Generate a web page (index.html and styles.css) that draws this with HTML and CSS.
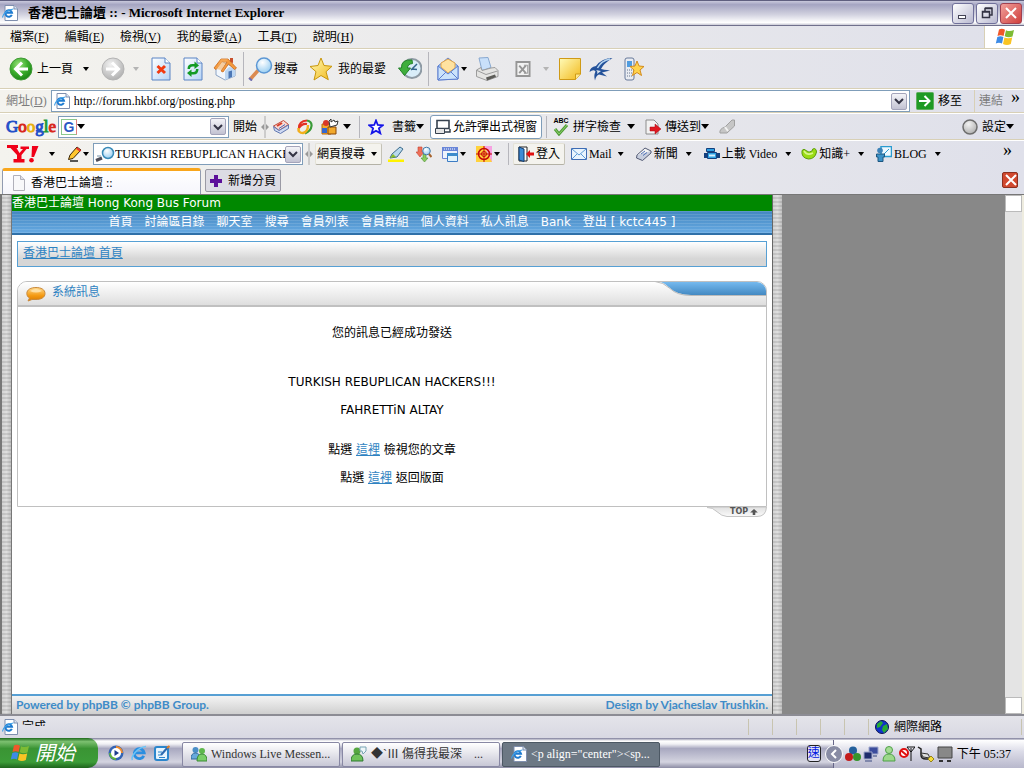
FILE: index.html
```html
<!DOCTYPE html>
<html lang="zh-Hant">
<head>
<meta charset="utf-8">
<title>香港巴士論壇 ::</title>
<link rel="stylesheet" href="styles.css">
</head>
<body>
<svg class="defs" aria-hidden="true">
  <defs>
    <radialGradient id="gGreen" cx=".4" cy=".3" r=".8"><stop offset="0" stop-color="#9be27c"/><stop offset=".5" stop-color="#3cae2c"/><stop offset="1" stop-color="#127a10"/></radialGradient>
    <radialGradient id="gGray" cx=".4" cy=".3" r=".8"><stop offset="0" stop-color="#f2f2f2"/><stop offset="1" stop-color="#a9a9a9"/></radialGradient>
    <radialGradient id="gSky" cx=".4" cy=".3" r=".8"><stop offset="0" stop-color="#fff"/><stop offset="1" stop-color="#8cc8f0"/></radialGradient>
    <linearGradient id="gGold" x1="0" y1="0" x2="1" y2="1"><stop offset="0" stop-color="#fffbb8"/><stop offset="1" stop-color="#f2b91c"/></linearGradient>
    <linearGradient id="gPage" x1="0" y1="0" x2="1" y2="1"><stop offset="0" stop-color="#fff"/><stop offset="1" stop-color="#b5d3f6"/></linearGradient>
    <linearGradient id="gOrange" x1="0" y1="0" x2="0" y2="1"><stop offset="0" stop-color="#ffd98c"/><stop offset=".6" stop-color="#f49a12"/><stop offset="1" stop-color="#d97b00"/></linearGradient>
    <linearGradient id="gSwoosh" x1="0" y1="0" x2="0" y2="1"><stop offset="0" stop-color="#79bdf2"/><stop offset="1" stop-color="#4389c2"/></linearGradient>
    <linearGradient id="gTop" x1="0" y1="0" x2="0" y2="1"><stop offset="0" stop-color="#e0e0e0"/><stop offset="1" stop-color="#fafafa"/></linearGradient>
  </defs>
  <symbol id="ie" viewBox="0 0 16 16"><path d="M3 .5h9l3.500 3.500v11.500H3z" fill="#fff" stroke="#7f8fae"/><path d="M12 .5V4h3.500" fill="#dbe5f4" stroke="#7f8fae"/><path d="M9.800 9.800a3.300 3.300 0 1 1 .2-2.100H4" fill="none" stroke="#1e7bd0" stroke-width="2"/><path d="M.8 12.500C0 10 5 4.500 11.500 4" fill="none" stroke="#3fa0e8" stroke-width="1.200"/></symbol>
  <symbol id="iebig" viewBox="0 0 16 16"><path d="M12.800 10.800a5 5 0 1 1 .4-3H4" fill="none" stroke="#2a8ee0" stroke-width="2.800"/><path d="M1.500 15C-.5 12 6 2.500 15 1.500" fill="none" stroke="#6cc4f6" stroke-width="1.500"/></symbol>
  <symbol id="flag" viewBox="0 0 20 18"><path d="M4 1.500Q7-.2 10 1.700L8.600 8Q5.500 6.500 2.500 8z" fill="#f0582a"/><path d="M11 2.200Q14.500 4 19 2L17.500 8.500Q13.500 10 9.700 8.200z" fill="#7dbb34"/><path d="M2.300 9Q5.500 7.500 8.400 9L7 15.500Q4 14 .8 15.500z" fill="#3d8be6"/><path d="M9.400 9.500Q13 11 17.200 9.500L15.800 16Q12 18 8 16z" fill="#f9c424"/></symbol>
  <symbol id="back" viewBox="0 0 24 24"><circle cx="12" cy="12" r="11" fill="url(#gGreen)" stroke="#3f9a35"/><path d="M13 5.500L6.500 12l6.500 6.500M7.500 12H19" fill="none" stroke="#fff" stroke-width="3"/></symbol>
  <symbol id="fwd" viewBox="0 0 24 24"><circle cx="12" cy="12" r="11" fill="url(#gGray)" stroke="#b4b4b4"/><path d="M11 5.500l6.500 6.500-6.500 6.500M16.500 12H5" fill="none" stroke="#fff" stroke-width="3"/></symbol>
  <symbol id="stop" viewBox="0 0 20 24"><path d="M1 1h13l5 5v17H1z" fill="url(#gPage)" stroke="#5b84c4"/><path d="M14 1v5h5" fill="#fff" stroke="#5b84c4"/><path d="M6.500 9l7.500 7M14 9l-7.500 7" stroke="#f23a10" stroke-width="3"/></symbol>
  <symbol id="refresh" viewBox="0 0 20 24"><path d="M1 1h13l5 5v17H1z" fill="url(#gPage)" stroke="#5b84c4"/><path d="M14 1v5h5" fill="#fff" stroke="#5b84c4"/><path d="M4.500 12q0-5 5-5h2V4.500l4.500 4-4.500 3.500V9.500h-2q-2.500 0-2.500 2.500zM15.500 12q0 5.500-5 5.500h-2V20L4 16l4.500-3.500V15h2q2.500 0 2.500-3z" fill="#129a24"/></symbol>
  <symbol id="home" viewBox="0 0 24 24"><path d="M3 11l5-7 14 7v8l-10 4-9-5z" fill="#f2f7fd" stroke="#8ca3c4"/><path d="M12 14l4-4 6 1v8l-10 4z" fill="#bcd6f2"/><path d="M15.500 14.500l3.500-1V20l-3.500 1.500z" fill="#4c77b5"/><path d="M17 1h3v5l-3-1z" fill="#c8502c"/><path d="M1 11L8 2l7 0 8.500 9-2 1.500-6-5.500-5.500 8-2-1L14 5 9 4.500 3 12.500z" fill="#f59a3c" stroke="#c96a1c" stroke-width=".8"/><path d="M8 2l7 0-6.500 11L3 12z" fill="#f9b060" opacity=".6"/></symbol>
  <symbol id="mag" viewBox="0 0 26 24"><path d="M2 22.500l8-9" stroke="#db8a50" stroke-width="3.500"/><circle cx="16" cy="8.500" r="7.500" fill="url(#gSky)" stroke="#5c97d4" stroke-width="1.500"/><path d="M1 21l3 2.500" stroke="#6b6eb4" stroke-width="2"/></symbol>
  <symbol id="magl" viewBox="0 0 20 16"><path d="M1 14.500l6-2.500" stroke="#4c4c58" stroke-width="3"/><circle cx="13" cy="7" r="5.500" fill="url(#gSky)" stroke="#398ab8" stroke-width="1.500"/><path d="M2 10h4" stroke="#7893a8"/></symbol>
  <symbol id="star" viewBox="0 0 24 24"><path d="M12 1l3 7.500 8 .8-6 5.400 2.300 8L12 18.500 5 23l2-8.300L1 9.500l8-1z" fill="url(#gGold)" stroke="#c8960c"/></symbol>
  <symbol id="bluestar" viewBox="0 0 16 16"><path d="M8 1.500l1.800 4.500 5 .3-3.900 3 1.400 5L8 11.700l-4.300 2.600 1.400-5-3.900-3 5-.3z" fill="#fff" stroke="#1414e8" stroke-width="1.800"/></symbol>
  <symbol id="history" viewBox="0 0 24 24"><circle cx="14" cy="11.500" r="9.500" fill="#d9edf9" stroke="#8e9aa4" stroke-width="2"/><path d="M13 13l6-6M14 12l5 .5" stroke="#33658c" stroke-width="1.500"/><path d="M14 3Q3 2 3.500 11H.5l6 7.500L12.500 11H9.500q0-4 5-4.500z" fill="#3fae3c" stroke="#23802a"/></symbol>
  <symbol id="mail" viewBox="0 0 22 24"><path d="M1 9l10-8 10 8v13l-20 1z" fill="#9fc4f2" stroke="#5d7fd0"/><path d="M4 10V6l7-4 7 4v5l-7 5z" fill="#ffe2a0" stroke="#e3a64c"/><path d="M1 9l10 8L21 9v13L1 23z" fill="#cbe3fb" stroke="#5d7fd0"/><path d="M1 23l8-8M21 22l-7-7" stroke="#5d7fd0"/></symbol>
  <symbol id="print" viewBox="0 0 24 24"><path d="M4 1l9-.5 3 10-9 3z" fill="#c9e0fa" stroke="#88a8d0"/><path d="M1.500 13L6 10.500l1 3 9-2.500 4-.5 3 3v6l-11 4-10.500-4z" fill="#e4e4e2" stroke="#9c9c9c"/><path d="M2 13.500l9 4 11.500-3.500" fill="none" stroke="#9c9c9c"/><path d="M11 20.500l9-3 1 2.500-9 3.500z" fill="#5c5c58"/></symbol>
  <symbol id="excel" viewBox="0 0 16 17"><path d="M1 1h14v15H1z" fill="#f2f2f2" stroke="#969696" stroke-width="2"/><path d="M4 5l7 8M11 5l-7 8" stroke="#969696" stroke-width="2"/><path d="M9 4.500h4V13H9" fill="none" stroke="#969696"/></symbol>
  <symbol id="note" viewBox="0 0 22 22"><path d="M.5.500h21v15.500l-5 5.500H.5z" fill="url(#gGold)" stroke="#cf9a16"/><path d="M16.500 21.500V16h5" fill="#ffe98e" stroke="#cf9a16"/></symbol>
  <symbol id="bird" viewBox="0 0 24 24"><path d="M23.500 1Q13 1 7 9 1 10 .5 15q4-3 6-.5-2 4-.5 9 1-5 4-6l8 2-5-4 8-2q-7-1-9-1.500Q14 7 23.500 1z" fill="#24529a"/><path d="M21 2Q12 4 8.500 11" stroke="#b4d4f0" fill="none" stroke-width="1.500"/><path d="M7 13q2 1 1 4l4-3z" fill="#dce6ee"/></symbol>
  <symbol id="phone" viewBox="0 0 22 24"><rect x="2" y="1" width="9" height="22" rx="2" fill="#e9ecf2" stroke="#66789a"/><path d="M4 4h5v6H4z" fill="#4f9ce0"/><path d="M4 13h5M4 16h5M4 19h5" stroke="#67758c" stroke-dasharray="1 1"/><path d="M14 4l2 5 5 .5-4 3.500 1.500 5.500-4.500-3-4.500 3L11 13 7 9.500l5-.5z" fill="#ffd34c" stroke="#d38b1c"/></symbol>
  <symbol id="go" viewBox="0 0 18 18"><rect x=".5" y=".5" width="17" height="17" rx="1" fill="#1f9a24" stroke="#5fae5c"/><path d="M3 9h10M8.500 4l5 5-5 5" fill="none" stroke="#fff" stroke-width="2"/></symbol>
  <symbol id="news" viewBox="0 0 16 16"><path d="M.5 7l10-5.500 5 4L6 11.500z" fill="#f7d9d2" stroke="#c34a38"/><path d="M.5 7.500l1 4 6 3 8-5V6L6 11.500z" fill="#cfdaf2" stroke="#6278b0"/><path d="M4 7l5-3" stroke="#d83c28" stroke-width="2"/><path d="M6 9.500l6-4" stroke="#4a6ac0"/></symbol>
  <symbol id="swirl" viewBox="0 0 16 16"><path d="M10 1.500Q2 2 2 9q3-5 8-4" fill="none" stroke="#e33124" stroke-width="2.200"/><path d="M10 1.500q5 1 4.500 5.500Q14 12 8 14.500" fill="none" stroke="#3a9b38" stroke-width="2.200"/><path d="M1.500 9Q1 14 6 14q5-1 5-8" fill="none" stroke="#f2b01c" stroke-width="2.400"/></symbol>
  <symbol id="toys" viewBox="0 0 18 16"><path d="M1 5h9v10H1z" fill="#f2a92c" stroke="#b8680c"/><path d="M7 8h8v7H7z" fill="#f2a92c" stroke="#8a4708"/><circle cx="5" cy="4" r="3" fill="#d83828"/><path d="M1 9h5v5H1z" fill="#3468d0"/><path d="M8 2l2-2v3l3-2 1 2 3-1-1 4-7 2z" fill="#fff" stroke="#333"/></symbol>
  <symbol id="popup" viewBox="0 0 16 16"><path d="M2 1.500h12v8H2z" fill="#fff" stroke="#36414e" stroke-width="1.600"/><path d="M.5 9.500h9v5h-9z" fill="#e4e4e4" stroke="#36414e"/><path d="M9 13h6V10" fill="none" stroke="#36414e" stroke-width="1.500"/></symbol>
  <symbol id="check" viewBox="0 0 16 12"><path d="M2 5l4 5L14 1" fill="none" stroke="#4f9c38" stroke-width="3"/><path d="M2 5l4 5L14 1" fill="none" stroke="#8fd26c"/></symbol>
  <symbol id="send" viewBox="0 0 16 16"><path d="M1 1h8l4 4v10H1z" fill="#f2f2f2" stroke="#8c8c8c"/><path d="M5 8h5V5l6 5-6 5v-3H5z" fill="#e01820" stroke="#a40810" stroke-width=".5"/></symbol>
  <symbol id="pen" viewBox="0 0 16 16"><path d="M1 14q-1-4 5-6l7-7 2.500 0v6L8 14z" fill="#c6c6c6" stroke="#a0a0a0"/><path d="M6 8l3 4" stroke="#f2f2f2" stroke-width="2"/></symbol>
  <symbol id="ball" viewBox="0 0 16 16"><circle cx="8" cy="8" r="7" fill="url(#gGray)" stroke="#6e6e6e" stroke-width="1.500"/></symbol>
  <symbol id="yahoo" viewBox="0 0 32 18"><path d="M0 0h11v3H9.500l3 5L16 4h-2.500V1.500H22V4h-2.500L14.500 10v4h3v3.500h-11V14H10v-4L3.500 3H0z" fill="#f00018"/><path d="M25 1l6.500 0L27 12h-2.500z" fill="#f00018"/><circle cx="24.500" cy="15.200" r="2.300" fill="#f00018"/></symbol>
  <symbol id="pencil" viewBox="0 0 16 16"><path d="M1.500 13.500L3 9l7-8 4 3-8 8.500z" fill="#ffc62e" stroke="#3a2608"/><path d="M9.500 2l4 3" stroke="#e33" stroke-width="2"/><path d="M3 15h8" stroke="#222" stroke-width="1.500"/></symbol>
  <symbol id="marker" viewBox="0 0 16 16"><path d="M0 13.500h16v2.500H0z" fill="#fff200"/><path d="M2 12l2-4 8-7 3 2-6 8z" fill="#b9d9ee" stroke="#3d6c8c"/><path d="M2 12l3-4 3 3z" fill="#8abe28"/></symbol>
  <symbol id="find" viewBox="0 0 16 16"><path d="M2 1h4v5h2l-4 5-4-5h2z" fill="#ef6f58" stroke="#c34432" stroke-width=".6"/><path d="M7 8h3v4h2l-3.500 4L5 12h2z" fill="#8acb5c" stroke="#4d9138" stroke-width=".6"/><circle cx="10.500" cy="5" r="3.800" fill="url(#gSky)" stroke="#4378a8"/><path d="M13 8l2.500 3" stroke="#a5622c" stroke-width="2"/></symbol>
  <symbol id="window" viewBox="0 0 16 16"><path d="M.5 1.500h15v11H.5z" fill="#eef3fc" stroke="#6a86d8"/><path d="M0 1h16v4H0z" fill="#6a86d8"/><path d="M2 3h12" stroke="#fff" stroke-dasharray="1 1"/><path d="M5.500 7.500h10v8h-10z" fill="#e2f3fc" stroke="#3d7cc4"/><path d="M5 7h11v3H5z" fill="#3d8ccc"/></symbol>
  <symbol id="target" viewBox="0 0 16 16"><path d="M0 0h16v16H0z" fill="#ffd23c"/><path d="M8 0h8v16z" fill="#f7a2e2"/><g fill="none" stroke="#c40808"><circle cx="8" cy="8" r="5.500" stroke-width="1.500"/><circle cx="8" cy="8" r="2.500"/><path d="M8 0v16M0 8h16"/></g></symbol>
  <symbol id="door" viewBox="0 0 16 16"><path d="M1 1h8v14H1z" fill="#fff" stroke="#222"/><path d="M1 1l5 2v12.500L1 14z" fill="#3d8cd6" stroke="#123a6c"/><path d="M8 8l4-4v2.500h4v3h-4V12z" fill="#e01010"/></symbol>
  <symbol id="env" viewBox="0 0 16 12"><path d="M.5.500h15v11H.5z" fill="#e9f4fd" stroke="#3f6cb4"/><path d="M1 1l7 6 7-6M1 11l5-5M15 11l-5-5" fill="none" stroke="#5b9bd8"/></symbol>
  <symbol id="paper" viewBox="0 0 16 14"><path d="M1 8l8-7 6 3-8 8z" fill="#f4f4f4" stroke="#535a74"/><path d="M1 8l-.5 3 6 2.500L15 6V4" fill="#c7cede" stroke="#535a74"/><path d="M5 7l4-3M7 8.500l4-3" stroke="#5173b8"/></symbol>
  <symbol id="video" viewBox="0 0 16 14"><path d="M3.500 5.500h9v6h-9zM2.500 1.500h8v3h-8z" fill="#2da0e2" stroke="#14407e"/><path d="M0 6h3v5H0zM13 6h3v5h-3z" fill="#14407e"/><path d="M5 7.500h6v2H5z" fill="#d6f0fc"/></symbol>
  <symbol id="bean" viewBox="0 0 16 12"><path d="M1 2.500Q3 0 5 2.500q3 3 6 .5 0-2.500 2.500-2.500Q15.500 1 15.500 4 14 11 7.500 11 0 10 1 2.500z" fill="#9bdc14" stroke="#5a9c0c"/><path d="M3 3q3 5 9 2" fill="none" stroke="#d8f78c" stroke-width="1.500"/></symbol>
  <symbol id="blog" viewBox="0 0 16 16"><path d="M5 .5h10.500v10H5z" fill="#eef8ff" stroke="#2a9bd0" stroke-width="1.500"/><path d="M8 8l5-5" stroke="#2a9bd0"/><circle cx="4" cy="4.500" r="2.800" fill="#3c82b8"/><path d="M.5 8h8v3H7v4.500H2V11H.5z" fill="#3c92c8" stroke="#1c5680"/></symbol>
  <symbol id="doc" viewBox="0 0 12 16"><path d="M.5.500h7l4 4v11H.5z" fill="#f8f8fa" stroke="#b0b0ba"/><path d="M7.500.5v4h4" fill="#dedee6" stroke="#b0b0ba"/></symbol>
  <symbol id="plus" viewBox="0 0 12 12"><path d="M4 0h4v4h4v4H8v4H4V8H0V4h4z" fill="#5c109a"/></symbol>
  <symbol id="cross" viewBox="0 0 16 16"><path d="M3 3l10 10M13 3L3 13" stroke="#fff" stroke-width="2"/></symbol>
  <symbol id="grip" viewBox="0 0 8 22"><path d="M4 0v22" stroke="#aaa"/><path d="M3 8v6L0 11zM5 8v6l3-3z" fill="#999"/></symbol>
  <symbol id="bubble" viewBox="0 0 20 16"><path d="M10 1.500c5 0 9 2 9 6s-4 6-9 6l-4 0-4 1.500 1.500-3C1.500 11 .8 9 .8 7.500.8 3.500 5 1.500 10 1.500z" fill="url(#gOrange)" stroke="#c98a3c"/><path d="M4 5q6-4 12 0-6 3-12 0z" fill="#ffe9b8" opacity=".8"/></symbol>
  <symbol id="media" viewBox="0 0 16 16"><circle cx="8" cy="8" r="7.500" fill="#3464b4"/><path d="M8 1a7 7 0 0 1 7 7H8z" fill="#f28c2c"/><path d="M1 8a7 7 0 0 0 7 7V8z" fill="#62b43c"/><circle cx="8" cy="8" r="5" fill="#fff"/><path d="M6.500 5l4.500 3-4.500 3z" fill="#1c3c8c"/></symbol>
  <symbol id="desk" viewBox="0 0 16 16"><rect x="1" y="2" width="13" height="13" rx="2" fill="#e7f4fd" stroke="#2b86cc" stroke-width="2"/><path d="M4 7h4M4 10h3M5 12.500h6" stroke="#2b86cc"/><path d="M7 10l7-8" stroke="#2b6ab0" stroke-width="2"/><path d="M13 3l2.500-2" stroke="#de7c28" stroke-width="2"/></symbol>
  <symbol id="duo" viewBox="0 0 16 16"><circle cx="4.500" cy="4" r="3" fill="#4b8fc8"/><path d="M0 13q0-6 4.500-6T9 13z" fill="#68a9dc" stroke="#30699c"/><circle cx="11" cy="5" r="3" fill="#5fb84c"/><path d="M6 15q0-7 5-7t5 7z" fill="#7ace68" stroke="#3b8c34"/></symbol>
  <symbol id="buddy" viewBox="0 0 16 16"><circle cx="8" cy="4" r="3.500" fill="#a4dc94" stroke="#4fa048"/><path d="M2 15q0-7 6-7t6 7z" fill="#9cd88a" stroke="#4fa048"/></symbol>
  <symbol id="chat" viewBox="0 0 16 16"><circle cx="6" cy="5" r="3.500" fill="#55a640"/><path d="M0 15q0-7 6-7t6 7z" fill="#6fc25a" stroke="#2f7a30"/><path d="M9 1h6v4l-3 3-1-3H9z" fill="#eef6f8" stroke="#78a4b4"/></symbol>
  <symbol id="globe" viewBox="0 0 14 14"><circle cx="7" cy="7" r="6.500" fill="#1234c8" stroke="#0a1450"/><path d="M2 4l4-3 2 2-3 4-3 1zM8 6l4-2 1 5-4 4-2-3z" fill="#27ac34"/></symbol>
  <symbol id="balls" viewBox="0 0 16 16"><circle cx="8" cy="4.500" r="4" fill="#24609c"/><circle cx="4" cy="11" r="4" fill="#c41c1c"/><circle cx="12" cy="11" r="4" fill="#37942c"/></symbol>
  <symbol id="net" viewBox="0 0 16 16"><path d="M6 1h9v7H6z" fill="#3b4c9c" stroke="#a0a8cc"/><path d="M1 6h8v7H1z" fill="#1e2c6c" stroke="#a0a8cc"/><path d="M2 15h7M10 10h4" stroke="#8088ac" stroke-width="2"/></symbol>
  <symbol id="noant" viewBox="0 0 16 16"><circle cx="5" cy="7" r="4" fill="#fff" stroke="#e01010" stroke-width="2"/><path d="M2 4.500l6 5" stroke="#e01010" stroke-width="2"/><path d="M8 1h8l-4 5zM12 2v13" fill="none" stroke="#111"/></symbol>
  <symbol id="modem" viewBox="0 0 18 16"><path d="M1 1l3 2v6q0 4 5 4h4" fill="none" stroke="#222" stroke-width="1.500"/><path d="M4 7l7 1 2 4-7-1z" fill="#ddd" stroke="#333"/><path d="M14 10l3 3-3 3-3-3z" fill="#f4dc3c" stroke="#96821c"/></symbol>
  <symbol id="graybox" viewBox="0 0 16 16"><path d="M1 1h14v11H1z" fill="#888" stroke="#444"/><path d="M2 15h4M10 15h4" stroke="#333" stroke-width="2"/></symbol>
</svg>

<header class="titlebar">
  <svg class="i16"><use href="#ie"/></svg>
  <h1 class="title">香港巴士論壇 :: - Microsoft Internet Explorer</h1>
  <button class="winbtn" aria-label="最小化"><svg class="i16" viewBox="0 0 16 16"><path d="M3 12h8" stroke="#445" stroke-width="4"/><path d="M4 12h6" stroke="#fff" stroke-width="2"/></svg></button>
  <button class="winbtn" aria-label="還原"><svg class="i16" viewBox="0 0 16 16"><path d="M6 6V3.500h7V10h-2.500M6 3h7.500M3.500 6.500h7v6h-7zM3 7h8" fill="none" stroke="#334" stroke-width="1.500"/></svg></button>
  <button class="winbtn red" aria-label="關閉"><svg class="i16"><use href="#cross"/></svg></button>
</header>

<nav class="menubar">
  <button>檔案(<u>F</u>)</button><button>編輯(<u>E</u>)</button><button>檢視(<u>V</u>)</button><button>我的最愛(<u>A</u>)</button><button>工具(<u>T</u>)</button><button>說明(<u>H</u>)</button>
  <div class="brand"><svg class="i20"><use href="#flag"/></svg></div>
</nav>

<div class="bar tools">
  <button><svg class="i24"><use href="#back"/></svg>上一頁</button><i class="caret m10"></i>
  <button class="m12" aria-label="下一頁"><svg class="i24"><use href="#fwd"/></svg></button><i class="caret off m8"></i>
  <button class="m12" aria-label="停止"><svg class="i20x24"><use href="#stop"/></svg></button>
  <button class="m12" aria-label="重新整理"><svg class="i20x24"><use href="#refresh"/></svg></button>
  <button class="m10" aria-label="首頁"><svg class="i24"><use href="#home"/></svg></button>
  <i class="sep m6"></i>
  <button class="tight m4"><svg class="i26"><use href="#mag"/></svg>搜尋</button>
  <button class="m10"><svg class="i26"><use href="#star"/></svg>我的最愛</button>
  <button class="m12" aria-label="記錄"><svg class="i24"><use href="#history"/></svg></button>
  <i class="sep m6"></i>
  <button class="m8" aria-label="郵件"><svg class="i22"><use href="#mail"/></svg></button><i class="caret m2"></i>
  <button class="m8" aria-label="列印"><svg class="i24"><use href="#print"/></svg></button>
  <button class="m16" aria-label="編輯"><svg class="i16"><use href="#excel"/></svg></button><i class="caret off m12"></i>
  <button class="m10" aria-label="便箋"><svg class="i22"><use href="#note"/></svg></button>
  <button class="m8" aria-label="Messenger"><svg class="i24"><use href="#bird"/></svg></button>
  <button class="m10" aria-label="行動"><svg class="i22"><use href="#phone"/></svg></button>
</div>

<form class="bar address">
  <label class="dim" for="url">網址(<u>D</u>)</label>
  <div class="combo grow m4"><svg class="i16"><use href="#ie"/></svg><input id="url" type="text" value="http://forum.hkbf.org/posting.php"><button type="button" class="drop" aria-label="展開"><svg viewBox="0 0 10 8"><path d="M1 2l4 4 4-4" fill="none" stroke="#334" stroke-width="2"/></svg></button></div>
  <button type="button" class="m6"><svg class="i18"><use href="#go"/></svg>移至</button>
  <i class="sep light m12"></i>
  <span class="dim m4">連結</span><span class="chev m8">»</span>
</form>

<div class="bar google">
  <span class="glogo"><b class="c1">G</b><b class="c2">o</b><b class="c3">o</b><b class="c1">g</b><b class="c4">l</b><b class="c2">e</b></span>
  <div class="combo gbox m4"><span class="gicon">G</span><i class="caret big"></i><input type="text" aria-label="Google 搜尋"><button class="drop" aria-label="展開"><svg viewBox="0 0 10 8"><path d="M1 2l4 4 4-4" fill="none" stroke="#334" stroke-width="2"/></svg></button></div>
  <button class="m4">開始</button><svg class="grip m4"><use href="#grip"/></svg>
  <button class="m4" aria-label="新聞"><svg class="i16"><use href="#news"/></svg></button>
  <button class="m8" aria-label="Orkut"><svg class="i16"><use href="#swirl"/></svg></button>
  <button class="m8" aria-label="小工具"><svg class="i18"><use href="#toys"/></svg></button><i class="caret big m4"></i>
  <i class="sep m8"></i>
  <button class="m8"><svg class="i16"><use href="#bluestar"/></svg><span class="m4">書籤</span></button><i class="caret big"></i>
  <button class="boxed tight m6"><svg class="i16"><use href="#popup"/></svg>允許彈出式視窗</button>
  <i class="sep m4"></i>
  <button class="m6"><span class="abc"><b>ABC</b><svg><use href="#check"/></svg></span>拼字檢查</button><i class="caret big m6"></i>
  <button class="m10"><svg class="i16"><use href="#send"/></svg>傳送到</button><i class="caret big"></i>
  <button class="m10" aria-label="標示"><svg class="i16"><use href="#pen"/></svg></button>
  <button class="push"><svg class="i16"><use href="#ball"/></svg>設定</button><i class="caret big"></i>
</div>

<div class="bar yahoo">
  <svg class="ylogo"><use href="#yahoo"/></svg><i class="caret m10"></i>
  <button class="m12" aria-label="編輯"><svg class="i16"><use href="#pencil"/></svg></button><i class="caret"></i>
  <div class="combo ybox m4"><svg class="i20x16"><use href="#magl"/></svg><input type="text" aria-label="Yahoo 搜尋" value="TURKISH REBUPLICAN HACKE"><button class="drop" aria-label="展開"><svg viewBox="0 0 10 8"><path d="M1 2l4 4 4-4" fill="none" stroke="#334" stroke-width="2"/></svg></button></div>
  <svg class="grip m2"><use href="#grip"/></svg>
  <button class="raised m2">網頁搜尋<i class="caret m6"></i></button>
  <button class="m6" aria-label="標記"><svg class="i16"><use href="#marker"/></svg></button>
  <button class="m12" aria-label="尋找"><svg class="i16"><use href="#find"/></svg></button>
  <button class="m10" aria-label="視窗"><svg class="i16"><use href="#window"/></svg></button><i class="caret m2"></i>
  <button class="m10" aria-label="目標"><svg class="i16"><use href="#target"/></svg></button><i class="caret m2"></i>
  <i class="sep m8"></i>
  <button class="raised m4"><svg class="i16"><use href="#door"/></svg>登入</button>
  <button class="m6"><svg class="i16"><use href="#env"/></svg>Mail</button><i class="caret m6"></i>
  <button class="m12"><svg class="i16"><use href="#paper"/></svg>新聞</button><i class="caret m8"></i>
  <button class="m12"><svg class="i16"><use href="#video"/></svg>上載 Video</button><i class="caret m8"></i>
  <button class="m10"><svg class="i16"><use href="#bean"/></svg>知識+</button><i class="caret m8"></i>
  <button class="m12"><svg class="i16"><use href="#blog"/></svg>BLOG</button><i class="caret m8"></i>
  <span class="chev push">»</span>
</div>

<div class="tabs">
  <button class="tab"><svg class="i12"><use href="#doc"/></svg>香港巴士論壇 ::</button>
  <button class="newtab"><svg class="i12"><use href="#plus"/></svg>新增分頁</button>
  <button class="closetab" aria-label="關閉分頁"><svg class="i16"><use href="#cross"/></svg></button>
</div>

<main class="view">
  <div class="stage">
    <div class="stripe left"></div>
    <div class="forum">
      <div class="green">香港巴士論壇 Hong Kong Bus Forum</div>
      <nav class="fnav"><a href="#">首頁</a><a href="#">討論區目錄</a><a href="#">聊天室</a><a href="#">搜尋</a><a href="#">會員列表</a><a href="#">會員群組</a><a href="#">個人資料</a><a href="#">私人訊息</a><a href="#">Bank</a><a href="#">登出 [ kctc445 ]</a></nav>
      <div class="crumb"><a href="#">香港巴士論壇 首頁</a></div>
      <section class="panel">
        <div class="phead"><svg class="i20x16"><use href="#bubble"/></svg><h2>系統訊息</h2>
          <svg class="swoosh" viewBox="0 0 112 15"><path d="M0 0H103Q112 1 112 8V14H36Q22 14 15 7 8 0 0 0z" fill="url(#gSwoosh)"/><path d="M0 .5Q8 1 15 7.500 22 14.500 36 14.500H112" fill="none" stroke="#bbb"/></svg></div>
        <div class="message">
          <p>您的訊息已經成功發送</p>
          <p class="gap-l">TURKISH REBUPLICAN HACKERS!!!</p>
          <p class="gap-s">FAHRETTiN ALTAY</p>
          <p class="gap-m">點選 <a href="#">這裡</a> 檢視您的文章</p>
          <p class="gap-s">點選 <a href="#">這裡</a> 返回版面</p>
        </div>
      </section>
      <a class="totop" href="#"><svg class="topbg" viewBox="0 0 60 10"><path d="M0 0H59.500Q59 9.500 50 9.500H20Q15 9.500 9 4 6 .5 0 .5z" fill="url(#gTop)" stroke="#c4c4c4"/></svg><span>TOP</span><svg class="uparrow" viewBox="0 0 9 7"><path d="M4.500 0L9 4H6v3H3V4H0z" fill="#555"/></svg></a>
      <footer class="ffoot"><span>Powered by phpBB © phpBB Group.</span><span>Design by Vjacheslav Trushkin.</span></footer>
    </div>
    <div class="stripe right"></div>
  </div>
  <div class="scroll"><i></i><i></i></div>
</main>

<div class="status">
  <svg class="i16"><use href="#ie"/></svg><span class="done">完成</span>
  <i class="cell push"></i><i class="cell"></i><i class="cell"></i><i class="cell"></i><i class="cell"></i>
  <span class="zone"><svg class="i14"><use href="#globe"/></svg>網際網路</span>
</div>

<footer class="taskbar">
  <button class="start"><svg class="i20"><use href="#flag"/></svg>開始</button>
  <div class="quick"><svg class="i16"><use href="#media"/></svg><svg class="i16"><use href="#iebig"/></svg><svg class="i16"><use href="#desk"/></svg></div>
  <button class="task"><svg class="i16"><use href="#duo"/></svg>Windows Live Messen...</button>
  <button class="task"><svg class="i16"><use href="#chat"/></svg>◆ˋⅢ 傷得我最深　...</button>
  <button class="task active"><svg class="i16"><use href="#ie"/></svg>&lt;p align="center"&gt;&lt;sp...</button>
  <span class="ime push">速</span>
  <div class="tray"><button class="expand" aria-label="展開"><svg viewBox="0 0 10 10"><path d="M7 1L3 5l4 4" fill="none" stroke="#fff" stroke-width="2"/></svg></button>
    <svg class="i16"><use href="#balls"/></svg><svg class="i16"><use href="#net"/></svg><svg class="i16"><use href="#buddy"/></svg><svg class="i16"><use href="#noant"/></svg><svg class="i18"><use href="#modem"/></svg><svg class="i16"><use href="#graybox"/></svg><span class="clock">下午 05:37</span></div>
</footer>
</body>
</html>
```

FILE: styles.css
```css
* { box-sizing: border-box; }
body {
  margin: 0;
  height: 100vh;
  display: flex;
  flex-direction: column;
  overflow: hidden;
  font: 12px/16px "Liberation Serif", "Noto Sans CJK TC", serif;
  color: #000;
  background: #e6e6ea;
}
button, input { font: inherit; color: inherit; border: 0; background: none; padding: 0; margin: 0; }
button { display: flex; align-items: center; gap: 4px; white-space: nowrap; flex: none; }
svg { flex: none; display: block; }
.defs { position: absolute; width: 0; height: 0; }

.i12 { width: 12px; height: 16px; }
.i14 { width: 14px; height: 14px; }
.i16 { width: 16px; height: 16px; }
.i18 { width: 18px; height: 18px; }
.i20 { width: 20px; height: 20px; }
.i20x16 { width: 20px; height: 16px; }
.i20x24 { width: 20px; height: 24px; }
.i22 { width: 22px; height: 24px; }
.i24 { width: 24px; height: 24px; }
.i26 { width: 26px; height: 24px; }
.tight { gap: 0; }
.m2 { margin-left: 2px; }
.m4 { margin-left: 4px; }
.m6 { margin-left: 6px; }
.m8 { margin-left: 8px; }
.m10 { margin-left: 10px; }
.m12 { margin-left: 12px; }
.m16 { margin-left: 16px; }
.push { margin-left: auto; }
.grow { flex: 1; }

.titlebar {
  height: 26px;
  display: flex;
  align-items: center;
  gap: 2px;
  padding: 0 2px;
  border-top: 1px solid #5f5f7f;
  border-bottom: 1px solid #70708c;
  background: linear-gradient(#c9c9dc, #a5a5c2 15%, #d0d0de 55%, #fff 90%, #c8c8d4);
}
.title { flex: 1; margin: 0 0 0 8px; font-size: 13px; line-height: 16px; font-weight: bold; }
.winbtn {
  width: 22px;
  height: 21px;
  justify-content: center;
  border: 1px solid #70709a;
  border-radius: 3px;
  background: linear-gradient(135deg, #fff, #b9b9d0);
}
.winbtn.red { border-color: #a04050; background: linear-gradient(135deg, #f2a09c, #cf3f3c); }

.menubar {
  height: 23px;
  display: flex;
  align-items: center;
  gap: 16px;
  padding-left: 10px;
  border-bottom: 1px solid #d8d0b6;
  background: linear-gradient(90deg, #f4f3ee, #dfe0ea);
}
.menubar button { display: block; }
.brand {
  margin-left: auto;
  width: 40px;
  height: 22px;
  display: flex;
  align-items: center;
  justify-content: center;
  background: #fff;
  border-left: 1px solid #d8d0b6;
}

.bar {
  display: flex;
  align-items: center;
  border-top: 1px solid #fff;
  border-bottom: 1px solid #d8d0b6;
  background: linear-gradient(90deg, #f4f3ee, #dfe0ea);
  white-space: nowrap;
}
.tools { height: 40px; padding-left: 9px; }
.address { height: 24px; padding: 0 4px 0 6px; }
.google { height: 27px; padding: 0 10px 0 6px; }
.yahoo { height: 27px; padding: 0 12px 0 7px; border-bottom: 0; }
.yahoo button { gap: 2px; }

.caret {
  flex: none;
  width: 6px;
  height: 4px;
  background: #000;
  clip-path: polygon(0 0, 100% 0, 50% 100%);
}
.caret.big { width: 8px; height: 5px; }
.caret.off { background: #b4b4b4; }
.sep { flex: none; width: 1px; height: 22px; background: #b6b6bc; }
.tools .sep { height: 34px; }
.sep.light { background: #d8d0b6; }
.dim { color: #7d7d7d; }
.chev { font-size: 18px; line-height: 12px; padding-bottom: 8px; }

.combo {
  display: flex;
  align-items: center;
  height: 22px;
  padding: 2px;
  border: 1px solid #7f9db9;
  background: #fff;
}
.combo input { flex: 1; min-width: 0; height: 16px; margin-left: 4px; outline: 0; }
.drop {
  width: 16px;
  height: 17px;
  justify-content: center;
  border: 1px solid #a4a4ba;
  border-radius: 2px;
  background: linear-gradient(#f4f4f8, #c2c2d2);
}
.drop svg { width: 10px; height: 8px; }
.gbox { width: 171px; }
.ybox { width: 210px; padding: 2px 1px; }
.ybox input { margin-left: 0; }
.glogo { font-size: 17px; width: 48px; line-height: 20px; }
.glogo b { font-weight: normal; -webkit-text-stroke: 1px; }
.c1 { color: #2350c8; }
.c2 { color: #d8281c; }
.c3 { color: #e8b010; }
.c4 { color: #249a38; }
.gicon {
  width: 16px;
  height: 16px;
  border: 1px solid #8cc88c;
  border-right-color: #e08080;
  font: bold 14px/14px "Liberation Sans", sans-serif;
  color: #2c58c4;
  text-align: center;
}
.grip { width: 8px; height: 22px; }
.boxed {
  height: 24px;
  padding: 0 4px;
  border: 1px solid #7f9db9;
  border-radius: 3px;
  background: #fff;
}
.boxed.tight { gap: 2px; }
.abc { display: flex; flex-direction: column; align-items: center; width: 16px; }
.abc b { font: bold 7px/7px "Liberation Sans", sans-serif; }
.abc svg { width: 16px; height: 12px; }
.raised {
  height: 22px;
  padding: 0 4px;
  border: 1px solid #e4e2d6;
  border-bottom-color: #b4b2a6;
  border-right-color: #c4c2b6;
  border-radius: 2px;
  background: #f4f3ee;
}
.raised:not(:has(svg)) { padding: 0 4px 0 1px; gap: 0; }
.ylogo { width: 32px; height: 18px; }

.tabs {
  height: 28px;
  display: flex;
  align-items: flex-start;
  padding: 1px 6px 0 2px;
  gap: 4px;
  background: linear-gradient(90deg, #f4f3ee, #dfe0ea);
  border-bottom: 1px solid #777;
}
.tab {
  width: 199px;
  height: 26px;
  padding: 0 10px;
  gap: 6px;
  border: 1px solid #919bb0;
  border-top: 3px solid #f9a61c;
  border-bottom: 0;
  border-radius: 3px 3px 0 0;
  background: linear-gradient(#fff, #f6f6fc);
}
.newtab {
  height: 23px;
  margin-top: 1px;
  padding: 0 4px;
  gap: 6px;
  border: 1px solid #9a9aa4;
  border-radius: 2px;
  background: #dcdce4;
}
.closetab {
  width: 16px;
  height: 16px;
  margin: 4px 0 0 auto;
  border: 1px solid #8c3020;
  border-radius: 2px;
  background: #d1492f;
}

.view { flex: 1; min-height: 0; display: flex; border-left: 2px solid #777; border-right: 2px solid #eeecdf; }
.stage { flex: 1; min-width: 0; display: flex; background: #888; }
.stripe {
  flex: none;
  width: 10px;
  background:
    linear-gradient(90deg, rgba(0, 0, 0, .05), rgba(0, 0, 0, 0) 50%, rgba(0, 0, 0, .12)),
    repeating-linear-gradient(#dedede 0 2px, #c8c8c8 2px 4px);
  border-right: 1px solid #777;
}
.stripe.right { border-right: 0; border-left: 1px solid #666; }
.forum {
  flex: 1;
  max-width: 760px;
  display: flex;
  flex-direction: column;
  background: #fff;
  font-family: "DejaVu Sans", "Noto Sans CJK TC", sans-serif;
}
.green { height: 16px; line-height: 16px; font-size: 12px; color: #fff; background: #080; }
.fnav {
  height: 24px;
  display: flex;
  justify-content: center;
  gap: 12px;
  line-height: 22px;
  border-bottom: 2px solid #2f70a8;
  background:
    repeating-linear-gradient(rgba(255, 255, 255, .12) 0 1px, transparent 1px 3px),
    linear-gradient(#4387c0, #66a9e2);
}
.fnav a { color: #fff; text-decoration: none; }
.crumb {
  height: 26px;
  margin: 6px 5px 14px;
  padding: 0 5px;
  line-height: 22px;
  border: 1px solid #57a0d4;
  background: linear-gradient(#fff, #d6d6d6 70%);
}
.crumb a, .message a { color: #2f83c2; }
.panel { margin: 0 5px; border: 1px solid #c0c0c0; border-radius: 10px 10px 0 0; overflow: hidden; }
.phead {
  position: relative;
  height: 25px;
  display: flex;
  align-items: center;
  gap: 6px;
  padding-left: 8px;
  border-bottom: 2px solid #c0c0c0;
  background: linear-gradient(#fff, #dedede);
}
.phead h2 { margin: 0; font-size: 12px; line-height: 20px; font-weight: normal; color: #2f83c2; align-self: flex-start; }
.swoosh { position: absolute; right: -1px; top: -1px; width: 112px; height: 15px; }
.message { padding: 18px 8px 20px; text-align: center; }
.message p { margin: 0; line-height: 16px; }
.message .gap-s { margin-top: 12px; }
.message .gap-m { margin-top: 24px; }
.message .gap-l { margin-top: 33px; }
.totop {
  position: relative;
  align-self: flex-end;
  display: flex;
  align-items: center;
  gap: 2px;
  width: 60px;
  height: 10px;
  margin-right: 5px;
  padding-left: 23px;
  color: #555;
  text-decoration: none;
  font: bold 8px/10px "DejaVu Sans", sans-serif;
}
.totop span { position: relative; }
.topbg { position: absolute; left: 0; top: 0; width: 60px; height: 10px; }
.uparrow { position: relative; width: 8px; height: 6px; }
.ffoot {
  margin-top: auto;
  height: 20px;
  display: flex;
  justify-content: space-between;
  padding: 0 4px;
  border-top: 2px solid #57a0d4;
  background: linear-gradient(#f4f4f4, #cfcfcf);
  color: #3f8cc8;
  font: bold 12px/18px Lato, sans-serif;
}
.scroll { width: 17px; display: flex; flex-direction: column; justify-content: space-between; background: #e4e4e4; }
.scroll i { height: 17px; background: #fff; border: 1px solid #bbb; }

.status {
  height: 24px;
  display: flex;
  align-items: center;
  padding: 0 2px;
  border-top: 2px solid #8c8c94;
  background: linear-gradient(#e4e4ea, #d8d8e2);
}
.done { height: 6px; margin: 0 0 8px 4px; overflow: hidden; line-height: 14px; }
.cell { width: 24px; height: 16px; border-left: 1px solid #c8c4b0; }
.zone { width: 154px; height: 16px; display: flex; align-items: center; gap: 5px; padding-left: 6px; border: solid #c8c4b0; border-width: 0 1px; }

.taskbar {
  height: 30px;
  display: flex;
  align-items: center;
  background: linear-gradient(#7c7c98, #fff 10%, #f0f0f4 20%, #a8a8c0 35%, #d4d4e0 80%, #8c8ca4);
}
.start {
  width: 98px;
  height: 30px;
  padding: 0 10px;
  gap: 5px;
  border-radius: 0 10px 10px 0;
  background: linear-gradient(#1e6a1c, #7cc070 12%, #3a9434 35%, #3c9c38 80%, #1e641c);
  color: #fff;
  font: italic 20px/24px "Liberation Sans", "Noto Sans CJK TC", sans-serif;
}
.quick { display: flex; gap: 7px; margin: 0 12px 0 10px; }
.task {
  width: 158px;
  height: 25px;
  margin: 2px 2px 0 0;
  padding: 0 8px;
  border: 1px solid #8888a4;
  border-radius: 2px;
  background: linear-gradient(#fff, #c8c8d6);
  color: #333;
}
.task.active { background: #6c7884; border-color: #4c5864; color: #fff; }
.ime { width: 14px; height: 17px; border: 1px solid #222; border-radius: 3px; font-size: 12px; line-height: 15px; color: #0018e0; background: #e4e4f4; }
.tray {
  height: 28px;
  display: flex;
  align-items: center;
  gap: 2px;
  margin: 2px 0 0 12px;
  padding-right: 13px;
  border-left: 1px solid #666688;
  background: linear-gradient(#fff, #dcdce8 40%, #b8b8cc);
}
.expand {
  width: 18px;
  height: 18px;
  margin-left: -9px;
  justify-content: center;
  border: 1px solid #fff;
  border-radius: 50%;
  background: #888ca4;
}
.expand svg { width: 10px; height: 10px; }
.clock { margin-left: 2px; }
```
